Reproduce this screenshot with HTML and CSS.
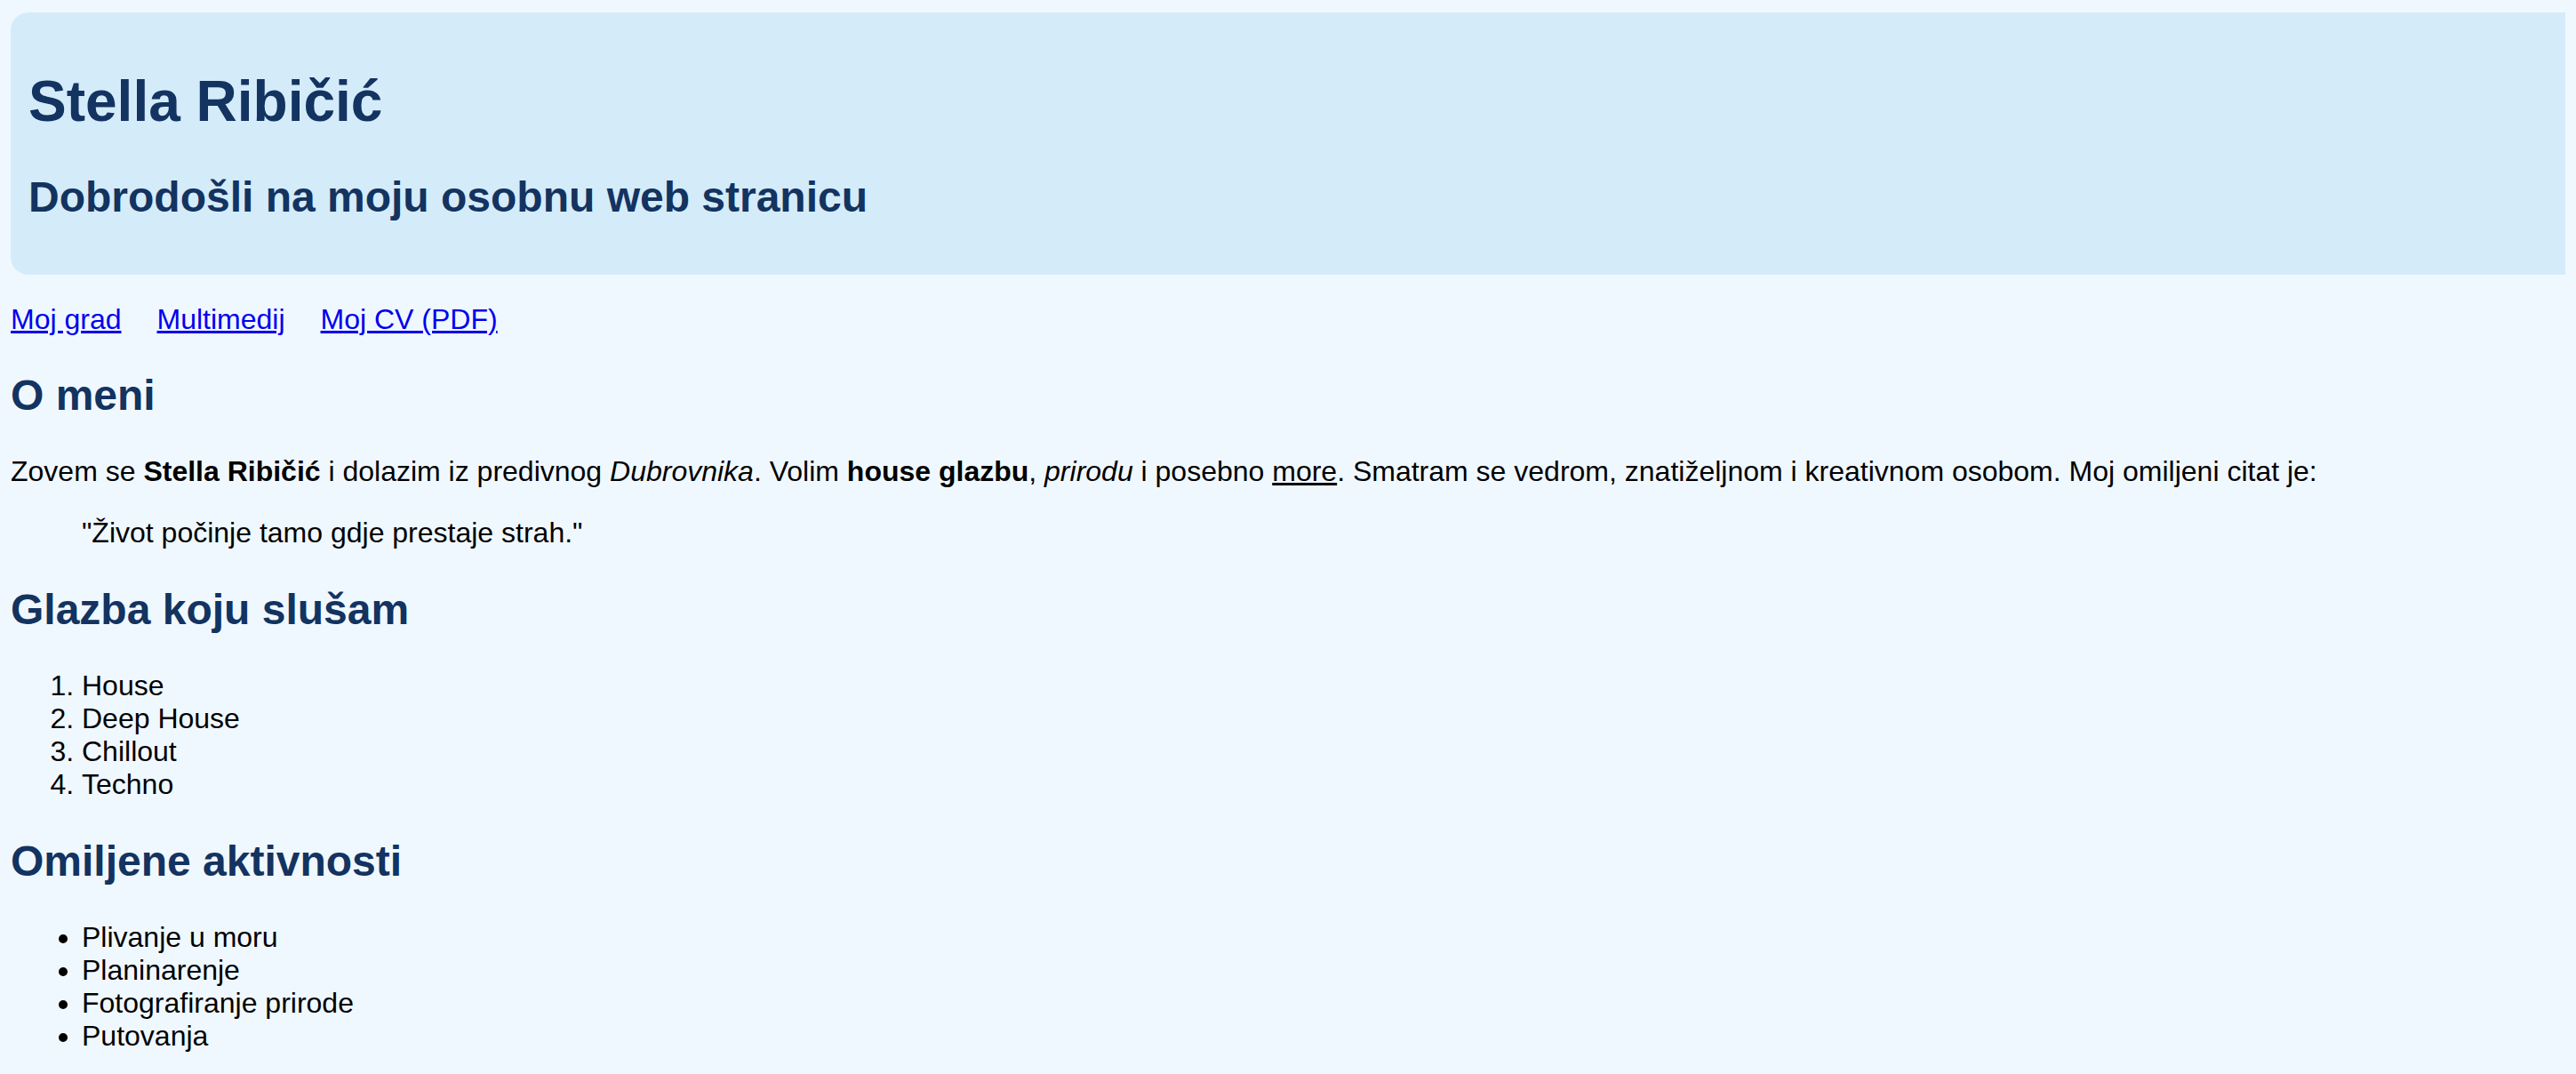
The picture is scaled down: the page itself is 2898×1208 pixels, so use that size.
FILE: index.html
```html
<!DOCTYPE html>
<html lang="hr">
<head>
<meta charset="utf-8">
<title>Stella Ribičić</title>
<link rel="stylesheet" href="styles.css">
</head>
<body>
<header class="site-header">
  <h1 class="site-title">Stella Ribičić</h1>
  <h2 class="site-subtitle">Dobrodošli na moju osobnu web stranicu</h2>
</header>
<nav class="site-nav">
  <a href="#">Moj grad</a>
  <a href="#">Multimedij</a>
  <a href="#">Moj CV (PDF)</a>
</nav>
<main class="content">
  <h2 class="section-title">O meni</h2>
  <p class="text">Zovem se <strong>Stella Ribičić</strong> i dolazim iz predivnog <em>Dubrovnika</em>. Volim <strong>house glazbu</strong>, <em>prirodu</em> i posebno <u>more</u>. Smatram se vedrom, znatiželjnom i kreativnom osobom. Moj omiljeni citat je:</p>
  <blockquote class="quote">"Život počinje tamo gdje prestaje strah."</blockquote>
  <h2 class="section-title">Glazba koju slušam</h2>
  <ol class="list">
    <li>House</li>
    <li>Deep House</li>
    <li>Chillout</li>
    <li>Techno</li>
  </ol>
  <h2 class="section-title">Omiljene aktivnosti</h2>
  <ul class="list list-last">
    <li>Plivanje u moru</li>
    <li>Planinarenje</li>
    <li>Fotografiranje prirode</li>
    <li>Putovanja</li>
  </ul>
</main>
</body>
</html>
```
FILE: styles.css
```css
html {
  background: #f0f8ff;
  overflow: hidden;
  scrollbar-width: none;
}
body {
  margin: 14px 12px 0 12px;
  font-family: "Liberation Sans", Arial, sans-serif;
  font-size: 32px;
  color: #000;
  background: #f0f8ff;
}
.site-header {
  background: #d4ebfa;
  border-radius: 20px 0 0 20px;
  padding: 20px;
  margin-right: -40px;
}
.site-title {
  font-size: 64px;
  margin: 0.67em 0;
  color: #133360;
}
.site-subtitle,
.section-title {
  font-size: 48px;
  margin: 0.83em 0;
  color: #133360;
}
.site-nav {
  display: flex;
  gap: 40px;
  margin: 32px 0;
}
.site-nav a {
  color: #0000ee;
  text-decoration: underline;
}
.text {
  margin: 32px 0;
}
.quote {
  margin: 32px 80px;
}
.list {
  margin: 32px 0;
  padding-left: 80px;
}
.list-last {
  margin-bottom: 0;
}
```
